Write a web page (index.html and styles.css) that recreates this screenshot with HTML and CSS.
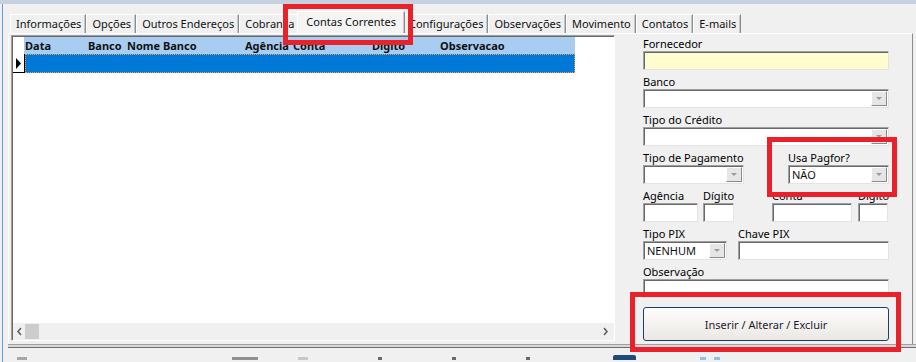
FILE: index.html
```html
<!DOCTYPE html>
<html>
<head>
  <title>Contas Correntes</title>
  <link rel="stylesheet" href="styles.css">
</head>
<body>
  <div class="topbar"></div>
  <div class="window">
    <div class="tabs">
      <div class="tab">Informações</div>
      <div class="tab">Opções</div>
      <div class="tab">Outros Endereços</div>
      <div class="tab">Cobrança</div>
      <div class="tab active">Contas Correntes</div>
      <div class="tab">Configurações</div>
      <div class="tab">Observações</div>
      <div class="tab">Movimento</div>
      <div class="tab">Contatos</div>
      <div class="tab">E-mails</div>
    </div>

    <div class="page">
      <!-- grid -->
      <div class="grid">
        <div class="grid-head">
          <div class="ind"></div>
          <div class="cols">
            <div class="col w-data">Data</div>
            <div class="col w-banco">Banco</div>
            <div class="col w-nome">Nome Banco</div>
            <div class="col w-ag">Agência</div>
            <div class="col w-conta">Conta</div>
            <div class="col w-dig">Dígito</div>
            <div class="col w-obs">Observacao</div>
          </div>
        </div>
        <div class="grid-row">
          <div class="ind">
            <svg width="11" height="19" viewBox="0 0 11 19"><polygon points="3,4 8,9.5 3,15" fill="#000"/></svg>
          </div>
          <div class="sel"></div>
        </div>
        <div class="grid-body"></div>
        <div class="hscroll">
          <svg class="arrow" width="10" height="17" viewBox="0 0 10 17"><polyline points="6,5 3,8.5 6,12" fill="none" stroke="#606060" stroke-width="1.6"/></svg>
          <div class="thumb"></div>
          <div class="track"></div>
          <svg class="arrow" width="10" height="17" viewBox="0 0 10 17"><polyline points="3,5 6,8.5 3,12" fill="none" stroke="#606060" stroke-width="1.6"/></svg>
        </div>
      </div>

      <!-- form -->
      <div class="side">
        <div class="field">
          <label>Fornecedor</label>
          <div class="box yellow"></div>
        </div>
        <div class="field">
          <label>Banco</label>
          <div class="box combo"><span class="val"></span><span class="drop"></span></div>
        </div>
        <div class="field">
          <label>Tipo do Crédito</label>
          <div class="box combo"><span class="val"></span><span class="drop"></span></div>
        </div>
        <div class="row">
          <div class="field f-101">
            <label>Tipo de Pagamento</label>
            <div class="box combo"><span class="val"></span><span class="drop"></span></div>
          </div>
          <div class="field f-101 push">
            <label>Usa Pagfor?</label>
            <div class="box combo"><span class="val">NÃO</span><span class="drop"></span></div>
          </div>
        </div>
        <div class="row">
          <div class="field f-55">
            <label>Agência</label>
            <div class="box"></div>
          </div>
          <div class="field f-31 gap-5">
            <label>Dígito</label>
            <div class="box"></div>
          </div>
          <div class="field f-80 gap-38">
            <label>Conta</label>
            <div class="box"></div>
          </div>
          <div class="field f-30 gap-6">
            <label>Dígito</label>
            <div class="box"></div>
          </div>
        </div>
        <div class="row">
          <div class="field f-84">
            <label>Tipo PIX</label>
            <div class="box combo"><span class="val">NENHUM</span><span class="drop"></span></div>
          </div>
          <div class="field f-151 push">
            <label>Chave PIX</label>
            <div class="box"></div>
          </div>
        </div>
        <div class="field">
          <label>Observação</label>
          <div class="box"></div>
        </div>
        <button class="btn">Inserir / Alterar / Excluir</button>
      </div>
    </div>

    <div class="bottomline"></div>
    <div class="toolbar">
      <span class="tb tb-a"></span>
      <span class="tb tb-bar"></span>
      <span class="tb tb-box"></span>
      <span class="tb tb-dot"></span>
      <span class="tb tb-dot"></span>
      <span class="tb tb-dot"></span>
      <span class="tb tb-navy"></span>
      <span class="tb tb-blue"></span>
      <span class="tb tb-blue"></span>
    </div>
  </div>

  <!-- red annotations -->
  <div class="mark mark-tab"></div>
  <div class="mark mark-pagfor"></div>
  <div class="mark mark-btn"></div>
</body>
</html>
```

FILE: styles.css
```css
body {
  margin: 0; width: 916px; height: 362px; overflow: hidden;
  background: #f0f0f0; color: #000;
  font-family: "Noto Sans", "Open Sans", sans-serif; font-size: 11px;
  position: relative;
}
.topbar { height: 4px; background: #c7d0de; }
.window {
  margin-left: 2px; border-left: 1px solid #5c9de0;
  height: 358px; display: flex; flex-direction: column;
}

/* tabs */
.tabs {
  display: flex; align-items: flex-end;
  height: 29px; padding-left: 7px; box-sizing: border-box;
}
.tab {
  height: 19px; line-height: 18px; padding: 0 4px 0 5px; box-sizing: border-box;
  border-top: 1px solid #fff; border-left: 1px solid #fff;
  border-right: 1px solid #8c8c8c; box-shadow: inset -1px 0 #c8c8c8;
  white-space: nowrap; color: #111;
}
.tab.active {
  height: 22px; line-height: 19px; padding: 0 8px; margin: 0 -2px;
  background: #f4f4f4; position: relative; z-index: 1;
}

/* page */
.page {
  display: flex; height: 311px; box-sizing: border-box;
  margin: 0 3px 0 5px; padding: 1px 0 0 2px;
  border-top: 1px solid #fff; border-left: 1px solid #fff;
  border-right: 1px solid #8c8c8c;
}

/* grid */
.grid {
  width: 604px; height: 306px; box-sizing: border-box;
  background: #fff; display: flex; flex-direction: column;
  border: 1px solid; border-color: #a0a0a0 #fff #fff #a0a0a0;
  box-shadow: inset 1px 1px #696969;
  padding: 1px 0 0 1px;
}
.grid-head { display: flex; height: 17px; }
.ind { width: 11px; flex: none; }
.cols { display: flex; background: #a9cdf1; width: 551px; }
.col { font-weight: bold; line-height: 17px; padding-left: 1px; box-sizing: border-box; white-space: nowrap; color: #111; }
.w-data { width: 63px; }
.w-banco { width: 39px; }
.w-nome { width: 118px; }
.w-ag { width: 48px; }
.w-conta { width: 79px; }
.w-dig { width: 68px; }
.w-obs { width: 136px; }
.grid-row { display: flex; height: 19px; }
.grid-row .ind { border-right: 1px solid #000; border-bottom: 1px solid #000; box-sizing: border-box; width: 12px; }
.grid-row .ind svg { display: block; }
.sel {
  width: 550px; box-sizing: border-box;
  background: #0078d7; border: 1px dotted #f0a040;
}
.grid-body { flex: 1; }
.hscroll {
  height: 17px; background: #f0f0f0; display: flex; align-items: center;
  padding: 0 3px 0 2px;
}
.hscroll .arrow { display: block; flex: none; }
.thumb { width: 14px; height: 15px; background: #cdcdcd; flex: none; }
.track { flex: 1; }

/* form */
.side {
  width: 246px; margin-left: 28px; padding-top: 2px;
  display: flex; flex-direction: column; gap: 5px;
}
.field label { display: block; height: 14px; line-height: 13px; white-space: nowrap; }
.box {
  height: 19px; box-sizing: border-box; background: #fff;
  border: 1px solid; border-color: #a0a0a0 #e3e3e3 #e3e3e3 #a0a0a0;
  box-shadow: inset 1px 1px #696969;
}
.box.yellow { background: #fffdcf; width: 245px; }
.field > .box { width: 100%; }
.combo { display: flex; align-items: center; padding: 1px 1px 1px 2px; }
.combo .val { flex: 1; padding-left: 1px; line-height: 15px; color: #111; }
.drop {
  width: 16px; height: 15px; box-sizing: border-box; flex: none;
  background: #e6e6e6;
  border: 1px solid; border-color: #fff #8a8a8a #8a8a8a #fff;
  display: flex; align-items: center; justify-content: center;
}
.drop::after {
  content: ""; border-left: 3px solid transparent; border-right: 3px solid transparent;
  border-top: 3px solid #9a9a9a;
}
.row { display: flex; }
.push { margin-left: auto; }
.f-101 { width: 101px; }
.f-55 { width: 55px; }
.f-31 { width: 31px; }
.f-80 { width: 80px; }
.f-30 { width: 30px; }
.f-84 { width: 84px; }
.f-151 { width: 151px; }
.gap-5 { margin-left: 5px; }
.gap-38 { margin-left: 38px; }
.gap-6 { margin-left: 6px; }
.btn {
  margin-top: 4px; height: 34px; width: 246px;
  border: 1px solid #1c3a6c; border-radius: 3px;
  background: linear-gradient(#fefefe, #ebe7e3);
  font-family: inherit; font-size: 11px; color: #1b1b30;
}

/* bottom */
.bottomline {
  height: 2px; margin-left: 5px;
  border-top: 1px solid #a0a0a0; border-bottom: 1px solid #6e6e6e;
  background: #d8d8d8;
}
.toolbar { display: flex; align-items: flex-end; height: 12px; padding-left: 14px; }
.tb { display: block; height: 3px; background: #a8a8a8; }
.tb-a { width: 10px; }
.tb-bar { width: 26px; margin-left: 205px; background: #909090; }
.tb-box { width: 10px; margin-left: 40px; background: #c8c8c8; }
.tb-dot { width: 4px; margin-left: 70px; background: #6a6a6a; }
.tb-navy { width: 23px; height: 5px; margin-left: 83px; background: #1e4a7c; border-radius: 2px 2px 0 0; }
.tb-blue { width: 6px; margin-left: 64px; background: #8fc0ea; }
.tb-blue + .tb-blue { margin-left: 8px; }

/* red annotations */
.mark { position: absolute; border: 5px solid #e8212b; box-sizing: border-box; }
.mark-tab { left: 283px; top: 4px; width: 130px; height: 41px; }
.mark-pagfor { left: 767px; top: 137px; width: 130px; height: 60px; }
.mark-btn { left: 630px; top: 292px; width: 271px; height: 60px; }
```
